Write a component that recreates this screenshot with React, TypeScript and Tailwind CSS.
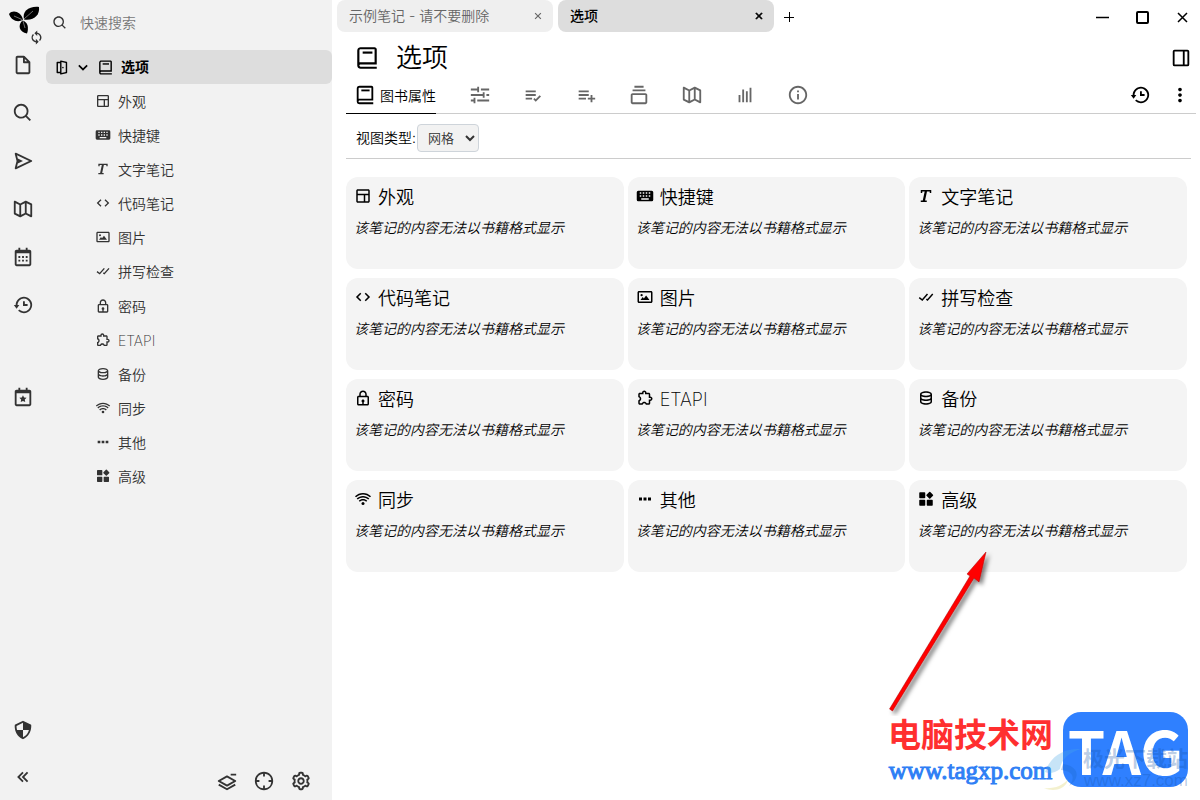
import type { ReactNode } from "react";
import type { IconType } from "react-icons";
import {
    BiBarChart, BiBook, BiCalendar, BiCalendarStar, BiCheckDouble, BiChevronDown, BiChevronsLeft, BiCode, BiCog,
    BiCollection, BiCrosshair, BiData, BiDockRight, BiDoorOpen, BiDotsHorizontal, BiDotsVerticalRounded, BiExtension,
    BiFileBlank, BiHistory, BiImage, BiInfoCircle, BiLayerMinus, BiLayout, BiListCheck, BiListPlus, BiLock, BiMapAlt,
    BiSearch, BiSend, BiShieldQuarter, BiSlider, BiSolidKeyboard, BiSolidWidget, BiSync, BiText, BiWifi, BiX,
} from "react-icons/bi";

type Note = { title: string; icon: IconType; className?: string };

const notes: Note[] = [
    { title: "外观", icon: BiLayout },
    { title: "快捷键", icon: BiSolidKeyboard },
    { title: "文字笔记", icon: BiText },
    { title: "代码笔记", icon: BiCode },
    { title: "图片", icon: BiImage },
    { title: "拼写检查", icon: BiCheckDouble },
    { title: "密码", icon: BiLock },
    { title: "ETAPI", icon: BiExtension, className: "font-extralight" },
    { title: "备份", icon: BiData },
    { title: "同步", icon: BiWifi },
    { title: "其他", icon: BiDotsHorizontal },
    { title: "高级", icon: BiSolidWidget },
];

const launchers: Note[] = [
    { title: "新建笔记", icon: BiFileBlank },
    { title: "搜索", icon: BiSearch },
    { title: "跳转", icon: BiSend },
    { title: "笔记地图", icon: BiMapAlt },
    { title: "日历", icon: BiCalendar },
    { title: "最近修改", icon: BiHistory },
];

const ribbonTabs: Note[] = [
    { title: "基本属性", icon: BiSlider },
    { title: "拥有的属性", icon: BiListCheck },
    { title: "继承的属性", icon: BiListPlus },
    { title: "笔记路径", icon: BiCollection },
    { title: "笔记地图", icon: BiMapAlt },
    { title: "相似笔记", icon: BiBarChart },
    { title: "笔记信息", icon: BiInfoCircle },
];

function IconButton({ label, className = "", children }: { label: string; className?: string; children: ReactNode }) {
    return (
        <button type="button" aria-label={label} className={`flex items-center justify-center shrink-0 ${className}`}>
            {children}
        </button>
    );
}

function Logo() {
    return (
        <svg viewBox="0 0 32 30" className="w-8 h-[30px]" aria-hidden="true">
            <path d="M1 8C5 3 13 6 15 13.500C10 17.500 3 14 1 8Z" />
            <path d="M31 1C32 9 26 15 16 13.500C14 5 21 0 31 1Z" />
            <path d="M14.500 14.500C20 16 21 22 19 27.500C11 26 9.500 19 14.500 14.500Z" />
            <path d="M6 10L14 13.500M16 13L25 5M15 15L17 22" stroke="#bbb" strokeWidth="0.6" fill="none" />
        </svg>
    );
}

function Launcher() {
    return (
        <nav className="flex flex-col items-center w-[46px] shrink-0 text-[#333]">
            <div className="relative w-full h-[41px] pl-2 pt-1.5 text-black">
                <Logo />
                <BiSync className="absolute right-px top-[29px] text-[#333]" size={17} />
            </div>
            {launchers.map(({ title, icon: Icon }) => (
                <IconButton key={title} label={title} className="w-full h-12">
                    <Icon size={22} />
                </IconButton>
            ))}
            <IconButton label="今日笔记" className="w-full h-12 mt-11">
                <BiCalendarStar size={22} />
            </IconButton>
            <IconButton label="受保护的会话" className="w-full h-12 mt-auto">
                <BiShieldQuarter size={22} />
            </IconButton>
            <IconButton label="折叠侧栏" className="w-full h-[46px]">
                <BiChevronsLeft size={22} />
            </IconButton>
        </nav>
    );
}

function Sidebar() {
    return (
        <aside className="flex flex-col w-[286px] shrink-0 text-[#333]">
            <label className="flex items-center gap-3 h-[50px] pl-1.5 pb-1">
                <BiSearch size={16} />
                <input placeholder="快速搜索" aria-label="快速搜索" className="flex-1 min-w-0 outline-none placeholder:text-[#777]" />
            </label>
            <div className="flex items-center h-[34px] pl-[7px] rounded-md bg-[#ddd] text-black">
                <BiDoorOpen size={17} />
                <BiChevronDown size={20} className="ml-[3px]" />
                <BiBook size={17} className="ml-1" />
                <span className="ml-[7px] font-bold">选项</span>
            </div>
            <ul className="grid auto-rows-fr h-[410px] pl-[49px] pt-px">
                {notes.map(({ title, icon: Icon, className }) => (
                    <li key={title} className="flex items-center gap-[7px]">
                        <Icon size={16} className="mb-0.5" />
                        <a href="#" className={className}>{title}</a>
                    </li>
                ))}
            </ul>
            <div className="flex justify-end gap-[15px] mt-auto pr-5 pb-2">
                <IconButton label="折叠笔记树"><BiLayerMinus size={22} /></IconButton>
                <IconButton label="定位当前笔记"><BiCrosshair size={22} /></IconButton>
                <IconButton label="笔记树设置"><BiCog size={22} /></IconButton>
            </div>
        </aside>
    );
}

function TabBar() {
    return (
        <header className="flex items-start h-9 pl-[5px]">
            <div className="flex items-center justify-between w-[216px] h-8 pl-3 pr-2 rounded-lg bg-[#efefef] text-[#666]">
                <span>示例笔记 - 请不要删除</span>
                <IconButton label="关闭标签"><BiX size={14} /></IconButton>
            </div>
            <div className="flex items-center justify-between w-[216px] h-8 ml-[5px] pl-3 pr-2 rounded-lg bg-[#ddd] font-medium">
                <span>选项</span>
                <IconButton label="关闭标签"><BiX size={14} strokeWidth={1} /></IconButton>
            </div>
            <IconButton label="新标签" className="h-[34px] ml-[7px]">
                <svg width="16" height="16"><path d="M3 8.500H13M8.500 3V13" stroke="black" /></svg>
            </IconButton>
            <div className="flex items-center gap-6 h-[34px] ml-auto pr-2.5">
                <IconButton label="最小化">
                    <svg width="16" height="16"><path d="M2 8.500H15" stroke="black" strokeWidth="1.500" /></svg>
                </IconButton>
                <IconButton label="最大化">
                    <svg width="16" height="16"><rect x="3" y="3" width="11" height="11" rx="1" fill="none" stroke="black" strokeWidth="2" /></svg>
                </IconButton>
                <IconButton label="关闭">
                    <svg width="16" height="16"><path d="M4 4L13 13M13 4L4 13" stroke="black" strokeWidth="1.500" /></svg>
                </IconButton>
            </div>
        </header>
    );
}

function Ribbon() {
    return (
        <>
            <div className="flex items-center h-11 pl-[22px] pr-2">
                <BiBook size={26} />
                <h1 className="ml-4 text-[26px] leading-8">选项</h1>
                <IconButton label="右侧面板" className="ml-auto"><BiDockRight size={22} /></IconButton>
            </div>
            <div className="flex items-stretch h-[34px] ml-3.5 mr-1 border-b border-[#ccc]">
                <button type="button" className="flex items-center gap-1 h-[34px] pl-2 pb-0.5 border-b border-black">
                    <BiBook size={22} className="mb-0.5" />
                    图书属性
                </button>
                <div className="flex items-center gap-[31px] ml-[33px] pb-1 text-[#666]">
                    {ribbonTabs.map(({ title, icon: Icon }) => (
                        <IconButton key={title} label={title}><Icon size={22} /></IconButton>
                    ))}
                </div>
                <div className="flex items-center gap-[18px] ml-auto pr-[5px] pb-1">
                    <IconButton label="历史版本"><BiHistory size={22} /></IconButton>
                    <IconButton label="更多"><BiDotsVerticalRounded size={22} /></IconButton>
                </div>
            </div>
            <div className="flex items-center h-[45px] ml-3.5 mr-[9px] pl-2.5 pt-2 pb-1 border-b border-[#ccc]">
                <label htmlFor="view-type">视图类型:</label>
                <select id="view-type" className="w-[62px] h-7 ml-px pl-1.5 border border-[#ced4da] rounded-sm bg-[#f2f2f2] text-[13px] text-[#333]">
                    <option>网格</option>
                    <option>列表</option>
                </select>
            </div>
        </>
    );
}

function NoteGrid() {
    return (
        <section className="grid grid-cols-3 gap-x-1 gap-y-[9px] ml-3.5 mr-[13px] mt-[18px]">
            {notes.map(({ title, icon: Icon, className }) => (
                <article key={title} className="h-[92px] px-2 pt-[7px] rounded-xl bg-[#f4f4f4]">
                    <h2 className="flex items-center gap-1.5 h-7 text-lg">
                        <Icon size={18} className="mb-1" />
                        <a href="#" className={className}>{title}</a>
                    </h2>
                    <p className="mt-1.5 italic">该笔记的内容无法以书籍格式显示</p>
                </article>
            ))}
        </section>
    );
}

function Arrow() {
    return (
        <svg viewBox="0 0 110 170" className="absolute right-[204px] bottom-[84px] w-[110px] h-[170px]" aria-hidden="true">
            <defs>
                <filter id="arrow-shadow" x="-20%" y="-20%" width="150%" height="150%">
                    <feDropShadow dx="3" dy="3" stdDeviation="2" floodOpacity="0.5" />
                </filter>
            </defs>
            <g filter="url(#arrow-shadow)" fill="#f00" stroke="#a00" strokeWidth="0.5">
                <path d="M3.500 163L84 30L81 28L100 6L93 36L88 32L6.500 165Z" />
            </g>
        </svg>
    );
}

function Watermark() {
    return (
        <div className="absolute right-3 bottom-[11px] flex items-center gap-2.5">
            <div className="flex flex-col items-center pt-2">
                <strong className="text-[33px] leading-9 font-bold text-[#ff2f2f]">电脑技术网</strong>
                <a href="#" className="font-['Liberation_Serif',serif] text-[25px] leading-9 font-normal text-[#2f7ff5] [-webkit-text-stroke:1px_#2f7ff5]">www.tagxp.com</a>
            </div>
            <div className="relative flex items-center justify-center w-[125px] h-[75px] rounded-[18px] bg-[#2f80ff]">
                <span className="font-['Noto_Sans_CJK_SC',sans-serif] text-[60px] leading-none font-bold text-white">TAG</span>
                <svg viewBox="0 0 40 44" className="absolute -left-5 -bottom-1 w-10 h-11 opacity-30" aria-hidden="true">
                    <path d="M2 25C8 8 22 1 38 2C24 6 18 14 17 22C12 26 6 27 2 25Z" fill="#4aa8e8" />
                    <path d="M18 23C30 24 33 31 26 39C38 31 36 19 20 17Z" fill="#1a66c8" />
                    <path d="M1 41C10 42 20 39 25 32C24 41 12 46 1 41Z" fill="#d8d060" />
                </svg>
                <div className="absolute right-0 -bottom-1 flex flex-col items-end whitespace-nowrap text-[#1454a8]/30">
                    <span className="text-[21px] leading-6 font-bold">极光下载站</span>
                    <span className="font-['Liberation_Sans',sans-serif] text-[17px] leading-5">www.xz7.com</span>
                </div>
            </div>
        </div>
    );
}

export default function App() {
    return (
        <div className="relative flex min-h-screen overflow-hidden bg-[#f2f2f2] font-['Inter','Noto_Sans_CJK_SC',sans-serif] text-sm font-[350] text-black">
            <Launcher />
            <Sidebar />
            <main className="flex-1 min-w-0 bg-white">
                <TabBar />
                <Ribbon />
                <NoteGrid />
            </main>
            <Arrow />
            <Watermark />
        </div>
    );
}
